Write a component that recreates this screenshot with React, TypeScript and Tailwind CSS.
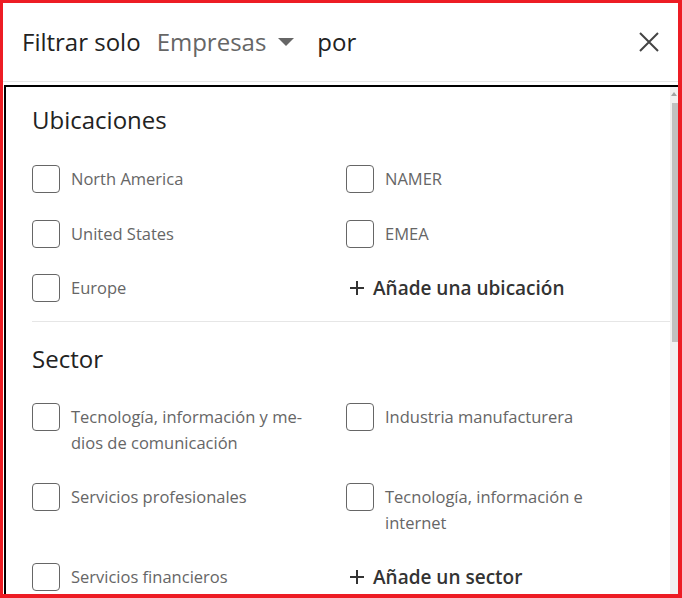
import React from 'react';

const font = { fontFamily: '"Open Sans", "Noto Sans", Arial, sans-serif' };

function Checkbox({ label }: { label: string }) {
  return (
    <label className="flex items-start gap-[11px]">
      <span className="w-7 h-7 shrink-0 rounded-[4px] border border-[#666] bg-white" />
      <span className="text-[16.5px] leading-[26px] pt-px text-[#666] max-w-[245px]">{label}</span>
    </label>
  );
}

function AddLink({ label }: { label: string }) {
  return (
    <button className="flex items-center gap-[8px] h-7 text-[19px] font-semibold text-[#333]">
      <svg width="16" height="16" viewBox="0 0 16 16" className="shrink-0 ml-[3px]">
        <path d="M8 1v14M1 8h14" stroke="#333" strokeWidth="2" />
      </svg>
      {label}
    </button>
  );
}

export default function App() {
  const ubicaciones = ['North America', 'NAMER', 'United States', 'EMEA', 'Europe'];
  const sectores = [
    'Tecnología, información y me- dios de comunicación',
    'Industria manufacturera',
    'Servicios profesionales',
    'Tecnología, información e internet',
    'Servicios financieros',
  ];

  return (
    <div
      className="w-[682px] h-[598px] bg-white border-l-[3px] border-t-[3px] border-r-4 border-b-4 border-[#ed1c24] flex flex-col overflow-hidden"
      style={font}
    >
      {/* Header */}
      <header className="h-[79px] shrink-0 flex items-center pl-[19px] pr-[17px] border-b border-[#e6e6e6]">
        <span className="text-[24px] text-[#222]">Filtrar solo</span>
        <span className="ml-[16px] text-[24px] text-[#666]">Empresas</span>
        <svg width="16" height="9" viewBox="0 0 16 9" className="ml-[12px]">
          <path d="M0 0h16L8 8z" fill="#666" />
        </svg>
        <span className="ml-[23px] text-[24px] text-[#222]">por</span>
        <button className="ml-auto w-6 h-6 flex items-center justify-center">
          <svg width="22" height="22" viewBox="0 0 22 22">
            <path d="M2 2l18 18M20 2L2 20" stroke="#444" strokeWidth="2" />
          </svg>
        </button>
      </header>

      {/* Scrollable panel */}
      <div className="mt-[3px] flex-1 flex border-t-2 border-l-2 border-black min-h-0 ml-px">
        <div className="flex-1 pl-[26px] overflow-hidden">
          <section className="pt-[18px]">
            <h2 className="text-[24px] leading-[30px] font-medium text-[#222]">Ubicaciones</h2>
            <div className="mt-[30px] grid grid-cols-[314px_1fr] gap-y-[26.5px]">
              <Checkbox label={ubicaciones[0]} />
              <Checkbox label={ubicaciones[1]} />
              <Checkbox label={ubicaciones[2]} />
              <Checkbox label={ubicaciones[3]} />
              <Checkbox label={ubicaciones[4]} />
              <AddLink label="Añade una ubicación" />
            </div>
            <div className="mt-[19px] h-px bg-[#e6e6e6]" />
          </section>

          <section className="pt-[22px]">
            <h2 className="text-[24px] leading-[30px] font-medium text-[#222]">Sector</h2>
            <div className="mt-[29px] grid grid-cols-[314px_1fr] gap-y-[27px]">
              <Checkbox label={sectores[0]} />
              <Checkbox label={sectores[1]} />
              <Checkbox label={sectores[2]} />
              <Checkbox label={sectores[3]} />
              <Checkbox label={sectores[4]} />
              <AddLink label="Añade un sector" />
            </div>
          </section>
        </div>

        {/* Scrollbar */}
        <div className="w-2 shrink-0 bg-[#f1f1f1] flex flex-col items-center">
          <svg width="6" height="4" viewBox="0 0 6 4" className="mt-[5px]">
            <path d="M0 4L3 0l3 4z" fill="#a3a3a3" />
          </svg>
          <div className="mt-[7px] w-[6px] ml-[2px] h-[239px] bg-[#c1c1c1]" />
        </div>
      </div>
    </div>
  );
}
